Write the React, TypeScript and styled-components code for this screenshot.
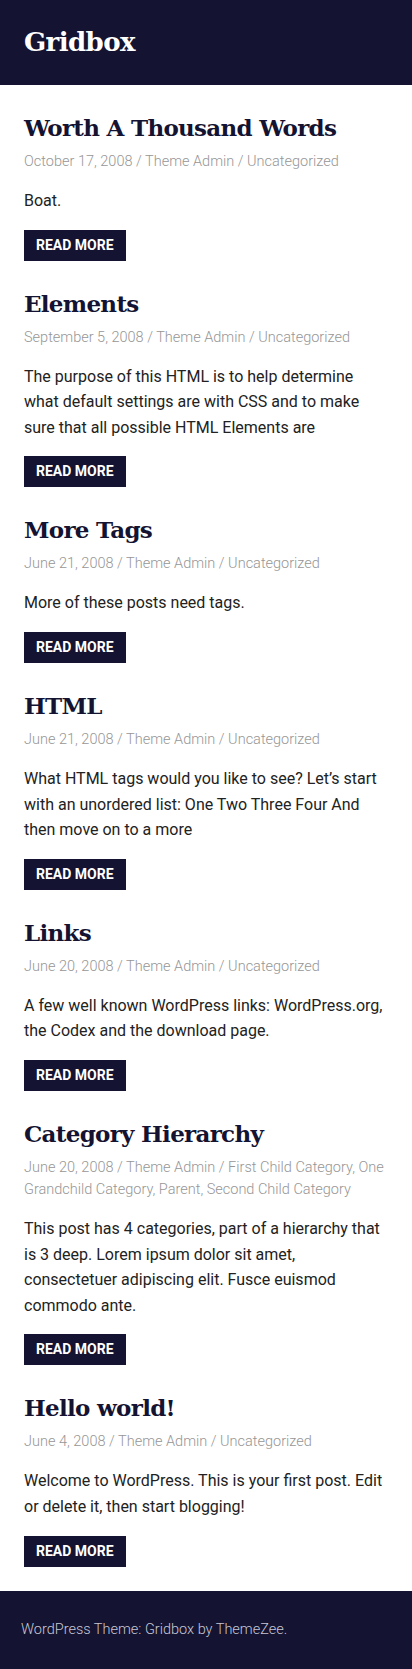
import { FC } from 'react'
import styled, { createGlobalStyle } from 'styled-components'

const GlobalStyle = createGlobalStyle`
	html, body {
		margin: 0;
		padding: 0;
		background: #fff;
	}
	body {
		font-family: Roboto, 'Liberation Sans', sans-serif;
		color: #222;
		-webkit-font-smoothing: antialiased;
	}
`

const navy = '#141331'

const Header = styled.header`
	background: ${navy};
	padding: 23px 24px;
`

const SiteTitle = styled.h1`
	margin: 0;
	font-family: 'DejaVu Serif', 'Liberation Serif', serif;
	font-weight: 700;
	font-size: 26px;
	line-height: 39px;
	letter-spacing: -0.6px;
	color: #fff;
`

const Main = styled.main`
	padding: 26px 24px 24px;
	display: flex;
	flex-direction: column;
	gap: 26px;
`

const Post = styled.article`
	display: flex;
	flex-direction: column;
	align-items: flex-start;
`

const PostTitle = styled.h2`
	margin: 0;
	font-family: 'DejaVu Serif', 'Liberation Serif', serif;
	font-weight: 700;
	font-size: 23px;
	line-height: 34px;
	letter-spacing: -0.7px;
	color: ${navy};
`

const Meta = styled.div`
	margin-top: 6px;
	font-size: 14.5px;
	font-weight: 300;
	line-height: 22px;
	color: #969696;
`

const Body = styled.p`
	margin: 15px 0 16px;
	font-size: 16px;
	line-height: 25.6px;
	color: #222;
`

const ReadMore = styled.a`
	display: inline-block;
	background: ${navy};
	color: #fff;
	font-weight: 700;
	font-size: 14px;
	line-height: 31px;
	padding: 0 12px;
	text-transform: uppercase;
	text-decoration: none;
`

const Footer = styled.footer`
	background: ${navy};
	padding: 28px 21px;
	font-size: 14.5px;
	font-weight: 300;
	line-height: 22px;
	color: #c8c7d4;
`

type PostData = {
	title: string
	meta: string
	body: string
}

const posts: PostData[] = [
	{
		title: 'Worth A Thousand Words',
		meta: 'October 17, 2008 / Theme Admin / Uncategorized',
		body: 'Boat.',
	},
	{
		title: 'Elements',
		meta: 'September 5, 2008 / Theme Admin / Uncategorized',
		body: 'The purpose of this HTML is to help determine what default settings are with CSS and to make sure that all possible HTML Elements are',
	},
	{
		title: 'More Tags',
		meta: 'June 21, 2008 / Theme Admin / Uncategorized',
		body: 'More of these posts need tags.',
	},
	{
		title: 'HTML',
		meta: 'June 21, 2008 / Theme Admin / Uncategorized',
		body: 'What HTML tags would you like to see? Let\u2019s start with an unordered list: One Two Three Four And then move on to a more',
	},
	{
		title: 'Links',
		meta: 'June 20, 2008 / Theme Admin / Uncategorized',
		body: 'A few well known WordPress links: WordPress.org, the Codex and the download page.',
	},
	{
		title: 'Category Hierarchy',
		meta: 'June 20, 2008 / Theme Admin / First Child Category, One Grandchild Category, Parent, Second Child Category',
		body: 'This post has 4 categories, part of a hierarchy that is 3 deep. Lorem ipsum dolor sit amet, consectetuer adipiscing elit. Fusce euismod commodo ante.',
	},
	{
		title: 'Hello world!',
		meta: 'June 4, 2008 / Theme Admin / Uncategorized',
		body: 'Welcome to WordPress. This is your first post. Edit or delete it, then start blogging!',
	},
]

const App: FC = () => {
	return (
		<>
			<GlobalStyle />
			<Header>
				<SiteTitle>Gridbox</SiteTitle>
			</Header>
			<Main>
				{posts.map((post) => (
					<Post key={post.title}>
						<PostTitle>{post.title}</PostTitle>
						<Meta>{post.meta}</Meta>
						<Body>{post.body}</Body>
						<ReadMore href='#'>Read more</ReadMore>
					</Post>
				))}
			</Main>
			<Footer>WordPress Theme: Gridbox by ThemeZee.</Footer>
		</>
	)
}

export default App
